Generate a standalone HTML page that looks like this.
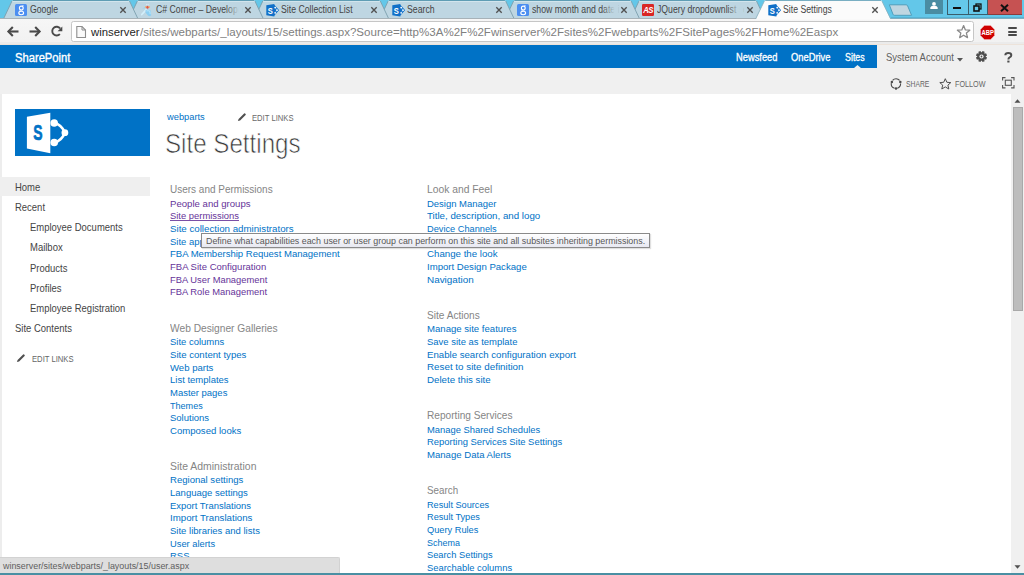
<!DOCTYPE html><html><head><meta charset='utf-8'><style>
*{margin:0;padding:0;box-sizing:border-box}
html,body{width:1024px;height:575px;overflow:hidden;background:#fff;font-family:"Liberation Sans", sans-serif}
.a{position:absolute}
.t{position:absolute;white-space:pre;transform-origin:0 0;font-family:"Liberation Sans", sans-serif}
</style></head><body>
<div class='a' style='left:0;top:0;width:1024px;height:19px;background:#63c7e9;z-index:0'></div>
<div class='a' style='left:0;top:18px;width:1024px;height:27px;background:linear-gradient(#f6f6f6,#f1f1f1);border-top:1px solid #fdfdfd;z-index:0'></div>
<svg class='a' style='left:0;top:0;z-index:1' width='1024' height='20' viewBox='0 0 1024 20'><path d='M630.70,18.5 L639.00,1 Q639.50,0 640.50,0 L755.00,0 Q756.00,0 756.50,1 L764.80,18.5 Z' fill='#bed6e2'/><path d='M630.70,18.5 L639.00,1 M756.50,1 L764.80,18.5' stroke='#7c9fae' stroke-width='0.9' fill='none'/><path d='M639.80,0.5 L755.70,0.5' stroke='#5f9db4' stroke-width='1'/><path d='M639.50,1.5 L756.00,1.5' stroke='#d2e5ed' stroke-width='1'/><path d='M505.30,18.5 L513.60,1 Q514.10,0 515.10,0 L629.60,0 Q630.60,0 631.10,1 L639.40,18.5 Z' fill='#bed6e2'/><path d='M505.30,18.5 L513.60,1 M631.10,1 L639.40,18.5' stroke='#7c9fae' stroke-width='0.9' fill='none'/><path d='M514.40,0.5 L630.30,0.5' stroke='#5f9db4' stroke-width='1'/><path d='M514.10,1.5 L630.60,1.5' stroke='#d2e5ed' stroke-width='1'/><path d='M379.90,18.5 L388.20,1 Q388.70,0 389.70,0 L504.20,0 Q505.20,0 505.70,1 L514.00,18.5 Z' fill='#bed6e2'/><path d='M379.90,18.5 L388.20,1 M505.70,1 L514.00,18.5' stroke='#7c9fae' stroke-width='0.9' fill='none'/><path d='M389.00,0.5 L504.90,0.5' stroke='#5f9db4' stroke-width='1'/><path d='M388.70,1.5 L505.20,1.5' stroke='#d2e5ed' stroke-width='1'/><path d='M254.50,18.5 L262.80,1 Q263.30,0 264.30,0 L378.80,0 Q379.80,0 380.30,1 L388.60,18.5 Z' fill='#bed6e2'/><path d='M254.50,18.5 L262.80,1 M380.30,1 L388.60,18.5' stroke='#7c9fae' stroke-width='0.9' fill='none'/><path d='M263.60,0.5 L379.50,0.5' stroke='#5f9db4' stroke-width='1'/><path d='M263.30,1.5 L379.80,1.5' stroke='#d2e5ed' stroke-width='1'/><path d='M129.10,18.5 L137.40,1 Q137.90,0 138.90,0 L253.40,0 Q254.40,0 254.90,1 L263.20,18.5 Z' fill='#bed6e2'/><path d='M129.10,18.5 L137.40,1 M254.90,1 L263.20,18.5' stroke='#7c9fae' stroke-width='0.9' fill='none'/><path d='M138.20,0.5 L254.10,0.5' stroke='#5f9db4' stroke-width='1'/><path d='M137.90,1.5 L254.40,1.5' stroke='#d2e5ed' stroke-width='1'/><path d='M3.70,18.5 L12.00,1 Q12.50,0 13.50,0 L128.00,0 Q129.00,0 129.50,1 L137.80,18.5 Z' fill='#bed6e2'/><path d='M3.70,18.5 L12.00,1 M129.50,1 L137.80,18.5' stroke='#7c9fae' stroke-width='0.9' fill='none'/><path d='M12.80,0.5 L128.70,0.5' stroke='#5f9db4' stroke-width='1'/><path d='M12.50,1.5 L129.00,1.5' stroke='#d2e5ed' stroke-width='1'/><path d='M0,18.5 L1024,18.5' stroke='#a7b2b8' stroke-width='1'/><path d='M755.60,19.5 L764.40,1 Q764.90,0 765.90,0 L880.40,0 Q881.40,0 881.90,1 L890.70,19.5 Z' fill='#fbfbfb'/><path d='M755.60,19 L764.40,1 M881.90,1 L890.70,19' stroke='#86aebd' stroke-width='0.8' fill='none'/><path d='M765.20,0.5 L881.10,0.5' stroke='#79aec2' stroke-width='1'/><path d='M889.3,4.8 L906.2,4.8 Q907.2,4.8 907.6,5.8 L911.6,15.3 L894.4,15.3 Q893.4,15.3 893,14.3 Z' fill='#bfd6e1' stroke='#4f9fbd' stroke-width='1' stroke-linejoin='round'/><path d='M891,17.9 L1024,17.9' stroke='#55abcb' stroke-width='1.2'/></svg>
<svg class='a' style='left:15px;top:4px;z-index:3' width='12' height='12' viewBox='0 0 12 12'><rect x='0' y='0' width='12' height='12' rx='1.5' fill='#4b8ef1'/><ellipse cx='6.3' cy='4.1' rx='1.9' ry='2' fill='none' stroke='#fff' stroke-width='1.1'/><path d='M7.2,1.8 L8.6,1.8' stroke='#fff' stroke-width='0.9'/><ellipse cx='6.2' cy='9' rx='2.4' ry='1.7' fill='none' stroke='#fff' stroke-width='1.1'/><path d='M5.5,6 Q4.2,6.6 5.4,7.4' fill='none' stroke='#fff' stroke-width='0.9'/></svg>
<svg class='a' style='left:118.8px;top:5.6px;z-index:3' width='8' height='8' viewBox='0 0 8 8'><path d='M1.3,1.3 L6.7,6.7 M6.7,1.3 L1.3,6.7' stroke='#505050' stroke-width='1.35'/></svg>
<svg class='a' style='left:141px;top:4px;z-index:3' width='13' height='13' viewBox='0 0 13 13'><path d='M0.8,10.5 L5,5.8' stroke='#d2eefa' stroke-width='1.8' stroke-linecap='round'/><path d='M2.2,4.5 Q3,3 4,4' stroke='#8fd3f3' stroke-width='1' fill='none'/><path d='M4.5,6.2 Q7,5.2 9.6,6.4 L10.2,11 Q9.2,13 7.2,11.8 L4.6,8.8 Z' fill='#8ccff2'/><path d='M5.5,7 Q7,6.3 8.8,7.2 L9.2,10.2' stroke='#c8ecfb' stroke-width='0.8' fill='none'/><circle cx='4.9' cy='3' r='1' fill='#ebb978'/><circle cx='8.1' cy='3' r='1' fill='#ebb978'/><path d='M5.3,1.1 L5.9,0.3 M7.5,1.1 L7,0.3' stroke='#ffffff' stroke-width='0.7'/><ellipse cx='6.5' cy='3.2' rx='1.1' ry='1.5' fill='#e05548'/></svg>
<svg class='a' style='left:244.2px;top:5.6px;z-index:3' width='8' height='8' viewBox='0 0 8 8'><path d='M1.3,1.3 L6.7,6.7 M6.7,1.3 L1.3,6.7' stroke='#505050' stroke-width='1.35'/></svg>
<svg class='a' style='left:266px;top:3.5px;z-index:3' width='13' height='13' viewBox='0 0 13 13'><path d='M0.3,1.3 L8.4,0 L8.4,12.4 L0.3,11.2 Z' fill='#1170c8'/><path d='M8,1.3 L12.3,6.2 L8,11.1 Z' fill='#1170c8' stroke='#1170c8' stroke-width='1.2' stroke-linejoin='round'/><circle cx='9.2' cy='3.6' r='0.9' fill='#fff'/><circle cx='11' cy='6.2' r='0.9' fill='#fff'/><circle cx='9.2' cy='8.8' r='0.9' fill='#fff'/><path d='M9.2,3.6 L11,6.2 L9.2,8.8' fill='none' stroke='#b5d5f2' stroke-width='0.5'/><text x='0' y='0' transform='translate(4.3,9.9) scale(0.8,1)' font-family='Liberation Sans' font-weight='bold' font-size='9.5' fill='#fff' text-anchor='middle'>S</text></svg>
<svg class='a' style='left:369.6px;top:5.6px;z-index:3' width='8' height='8' viewBox='0 0 8 8'><path d='M1.3,1.3 L6.7,6.7 M6.7,1.3 L1.3,6.7' stroke='#505050' stroke-width='1.35'/></svg>
<svg class='a' style='left:392px;top:3.5px;z-index:3' width='13' height='13' viewBox='0 0 13 13'><path d='M0.3,1.3 L8.4,0 L8.4,12.4 L0.3,11.2 Z' fill='#1170c8'/><path d='M8,1.3 L12.3,6.2 L8,11.1 Z' fill='#1170c8' stroke='#1170c8' stroke-width='1.2' stroke-linejoin='round'/><circle cx='9.2' cy='3.6' r='0.9' fill='#fff'/><circle cx='11' cy='6.2' r='0.9' fill='#fff'/><circle cx='9.2' cy='8.8' r='0.9' fill='#fff'/><path d='M9.2,3.6 L11,6.2 L9.2,8.8' fill='none' stroke='#b5d5f2' stroke-width='0.5'/><text x='0' y='0' transform='translate(4.3,9.9) scale(0.8,1)' font-family='Liberation Sans' font-weight='bold' font-size='9.5' fill='#fff' text-anchor='middle'>S</text></svg>
<svg class='a' style='left:495.0px;top:5.6px;z-index:3' width='8' height='8' viewBox='0 0 8 8'><path d='M1.3,1.3 L6.7,6.7 M6.7,1.3 L1.3,6.7' stroke='#505050' stroke-width='1.35'/></svg>
<svg class='a' style='left:517px;top:4px;z-index:3' width='12' height='12' viewBox='0 0 12 12'><rect x='0' y='0' width='12' height='12' rx='1.5' fill='#4b8ef1'/><ellipse cx='6.3' cy='4.1' rx='1.9' ry='2' fill='none' stroke='#fff' stroke-width='1.1'/><path d='M7.2,1.8 L8.6,1.8' stroke='#fff' stroke-width='0.9'/><ellipse cx='6.2' cy='9' rx='2.4' ry='1.7' fill='none' stroke='#fff' stroke-width='1.1'/><path d='M5.5,6 Q4.2,6.6 5.4,7.4' fill='none' stroke='#fff' stroke-width='0.9'/></svg>
<svg class='a' style='left:620.4px;top:5.6px;z-index:3' width='8' height='8' viewBox='0 0 8 8'><path d='M1.3,1.3 L6.7,6.7 M6.7,1.3 L1.3,6.7' stroke='#505050' stroke-width='1.35'/></svg>
<svg class='a' style='left:642px;top:4px;z-index:3' width='12' height='12' viewBox='0 0 12 12'><rect x='0' y='0' width='12' height='12' rx='1.2' fill='#d92624'/><text x='0' y='0' transform='translate(6,9.2) scale(0.95,1)' font-family='Liberation Sans' font-style='italic' font-weight='bold' font-size='8.2' fill='#fff' text-anchor='middle' letter-spacing='-0.6'>AS</text></svg>
<svg class='a' style='left:745.8px;top:5.6px;z-index:3' width='8' height='8' viewBox='0 0 8 8'><path d='M1.3,1.3 L6.7,6.7 M6.7,1.3 L1.3,6.7' stroke='#505050' stroke-width='1.35'/></svg>
<svg class='a' style='left:768px;top:3.5px;z-index:3' width='13' height='13' viewBox='0 0 13 13'><path d='M0.3,1.3 L8.4,0 L8.4,12.4 L0.3,11.2 Z' fill='#1170c8'/><path d='M8,1.3 L12.3,6.2 L8,11.1 Z' fill='#1170c8' stroke='#1170c8' stroke-width='1.2' stroke-linejoin='round'/><circle cx='9.2' cy='3.6' r='0.9' fill='#fff'/><circle cx='11' cy='6.2' r='0.9' fill='#fff'/><circle cx='9.2' cy='8.8' r='0.9' fill='#fff'/><path d='M9.2,3.6 L11,6.2 L9.2,8.8' fill='none' stroke='#b5d5f2' stroke-width='0.5'/><text x='0' y='0' transform='translate(4.3,9.9) scale(0.8,1)' font-family='Liberation Sans' font-weight='bold' font-size='9.5' fill='#fff' text-anchor='middle'>S</text></svg>
<svg class='a' style='left:871.2px;top:5.6px;z-index:3' width='8' height='8' viewBox='0 0 8 8'><path d='M1.3,1.3 L6.7,6.7 M6.7,1.3 L1.3,6.7' stroke='#505050' stroke-width='1.35'/></svg>
<div class='a' style='left:225.7px;top:2px;width:16px;height:15px;background:linear-gradient(90deg,rgba(190,214,226,0),#bed6e2 80%);z-index:3'></div>
<div class='a' style='left:351.1px;top:2px;width:16px;height:15px;background:linear-gradient(90deg,rgba(190,214,226,0),#bed6e2 80%);z-index:3'></div>
<div class='a' style='left:601.9px;top:2px;width:16px;height:15px;background:linear-gradient(90deg,rgba(190,214,226,0),#bed6e2 80%);z-index:3'></div>
<div class='a' style='left:727.3px;top:2px;width:16px;height:15px;background:linear-gradient(90deg,rgba(190,214,226,0),#bed6e2 80%);z-index:3'></div>
<div class='a' style='left:925px;top:0;width:18px;height:14px;background:#4a8ca2;z-index:2'><svg width='18' height='14' viewBox='0 0 18 14' style='position:absolute;left:0;top:0'><circle cx='9' cy='3.9' r='1.9' fill='#fff'/><path d='M5.2,9 L5.6,7.2 Q6,6.1 7.5,6.1 L10.5,6.1 Q12,6.1 12.4,7.2 L12.8,9 Z' fill='#fff'/></svg></div>
<div class='a' style='left:947px;top:0;width:41px;height:14.5px;border:1px solid #3a5d6b;border-top:none;background:#65c8ea;z-index:2'></div>
<div class='a' style='left:967.5px;top:0;width:1px;height:14px;background:#3a5d6b;z-index:2'></div>
<div class='a' style='left:953px;top:7px;width:8px;height:2px;background:#111;z-index:3'></div>
<svg class='a' style='left:973px;top:3px;z-index:3' width='9' height='9' viewBox='0 0 9 9'><rect x='3' y='1' width='5' height='5' fill='none' stroke='#111' stroke-width='1.3'/><rect x='1' y='3' width='5' height='5' fill='#65c8ea' stroke='#111' stroke-width='1.6'/></svg>
<div class='a' style='left:987.5px;top:0;width:34.5px;height:14.5px;background:#c65252;border-bottom:1px solid #8a3b3b;z-index:2'></div>
<svg class='a' style='left:1000px;top:3.5px;z-index:3' width='9' height='8' viewBox='0 0 9 8'><path d='M1,0.8 L8,7.2 M8,0.8 L1,7.2' stroke='#111' stroke-width='2'/></svg>
<svg class='a' style='left:5px;top:25px;z-index:3' width='60' height='16' viewBox='0 0 60 16'><path d='M3.5,6.5 L13.5,6.5' stroke='#4a4a4a' stroke-width='2.1'/><path d='M7.8,2.1 L3.4,6.5 L7.8,10.9' fill='none' stroke='#4a4a4a' stroke-width='2.1'/><path d='M24.5,6.5 L34.6,6.5' stroke='#4a4a4a' stroke-width='2.1'/><path d='M30.2,2.1 L34.6,6.5 L30.2,10.9' fill='none' stroke='#4a4a4a' stroke-width='2.1'/><path d='M54.87,9.13 A4.4,4.4 0 1 1 55.2,3.5' fill='none' stroke='#4a4a4a' stroke-width='1.9'/><path d='M52.6,6.3 L57.3,6.3 L57.3,1.6 Z' fill='#4a4a4a'/></svg>
<div class='a' style='left:70.5px;top:21px;width:903px;height:21px;background:#fff;border:1px solid #c6c6c6;border-radius:2.5px;z-index:2'></div>
<svg class='a' style='left:75px;top:25px;z-index:3' width='12' height='14' viewBox='0 0 12 14'><path d='M1.8,1.5 L7,1.5 L10.5,5 L10.5,12.5 L1.8,12.5 Z' fill='#fafafa' stroke='#8e8e8e' stroke-width='1.1'/><path d='M7,1.5 L7,5 L10.5,5' fill='none' stroke='#8e8e8e' stroke-width='1'/></svg>
<svg class='a' style='left:956px;top:24px;z-index:3' width='16' height='16' viewBox='0 0 16 16'><path d='M7.6,1.6 L9.4,5.9 L13.8,6.2 L10.4,9.1 L11.5,13.6 L7.6,11.2 L3.7,13.6 L4.8,9.1 L1.4,6.2 L5.8,5.9 Z' fill='#fff' stroke='#8a8a8a' stroke-width='1.3' stroke-linejoin='round'/></svg>
<svg class='a' style='left:979px;top:23.5px;z-index:3' width='17' height='17' viewBox='0 0 17 17'><path d='M5.4,1.3 L11.6,1.3 L15.7,5.4 L15.7,11.6 L11.6,15.7 L5.4,15.7 L1.3,11.6 L1.3,5.4 Z' fill='#cf0000' stroke='#fff' stroke-width='0.6'/><text x='0' y='0' transform='translate(8.6,10.9) scale(0.82,1)' font-family='Liberation Sans' font-weight='bold' font-size='7.2' fill='#fff' text-anchor='middle'>ABP</text></svg>
<div class='a' style='left:1007.8px;top:26.9px;width:9px;height:2px;border-radius:1px;background:#484848;z-index:3'></div>
<div class='a' style='left:1007.8px;top:30.6px;width:9px;height:2px;border-radius:1px;background:#484848;z-index:3'></div>
<div class='a' style='left:1007.8px;top:34.3px;width:9px;height:2px;border-radius:1px;background:#484848;z-index:3'></div>
<div class='a' style='left:0;top:42px;width:1024px;height:2px;background:#ebebeb;z-index:2'></div>
<div class='a' style='left:0;top:44px;width:1024px;height:1px;background:#ede3da;z-index:2'></div>
<div class='a' style='left:0;top:45px;width:877px;height:23px;background:#0072c6;z-index:2'></div>
<div class='a' style='left:877px;top:45px;width:147px;height:23px;background:#f0f0f0;z-index:2'></div>
<svg class='a' style='left:852px;top:64px;z-index:3' width='11' height='5' viewBox='0 0 11 5'><path d='M1.5,4.5 L5.5,1 L9.5,4.5 Z' fill='#f0f0f0'/></svg>
<div class='a' style='left:0;top:68px;width:1024px;height:26px;background:#f0f0f0;z-index:1'></div>
<svg class='a' style='left:956.5px;top:57.5px;z-index:3' width='6' height='4' viewBox='0 0 6 4'><path d='M0,0 L6,0 L3,3.5 Z' fill='#555'/></svg>
<svg class='a' style='left:975px;top:50.4px;z-index:3' width='13' height='13' viewBox='0 0 13 13'><g fill='#4d4d4d'><rect x='5.25' y='1' width='2.5' height='3' rx='0.2' transform='rotate(22.5 6.5 6.5)'/><rect x='5.25' y='1' width='2.5' height='3' rx='0.2' transform='rotate(67.5 6.5 6.5)'/><rect x='5.25' y='1' width='2.5' height='3' rx='0.2' transform='rotate(112.5 6.5 6.5)'/><rect x='5.25' y='1' width='2.5' height='3' rx='0.2' transform='rotate(157.5 6.5 6.5)'/><rect x='5.25' y='1' width='2.5' height='3' rx='0.2' transform='rotate(202.5 6.5 6.5)'/><rect x='5.25' y='1' width='2.5' height='3' rx='0.2' transform='rotate(247.5 6.5 6.5)'/><rect x='5.25' y='1' width='2.5' height='3' rx='0.2' transform='rotate(292.5 6.5 6.5)'/><rect x='5.25' y='1' width='2.5' height='3' rx='0.2' transform='rotate(337.5 6.5 6.5)'/><circle cx='6.5' cy='6.5' r='4.3'/></g><circle cx='6.5' cy='6.5' r='2.1' fill='#f0f0f0'/><circle cx='6.5' cy='6.5' r='0.9' fill='#4d4d4d'/></svg>
<svg class='a' style='left:1004px;top:51.5px;z-index:3' width='9' height='11' viewBox='0 0 9 11'><path d='M1.3,3.3 Q1.4,1 4.3,1 Q7.3,1 7.3,3.2 Q7.3,4.6 5.6,5.4 Q4.4,6 4.4,7.6' fill='none' stroke='#4d4d4d' stroke-width='2'/><rect x='3.3' y='8.6' width='2.2' height='1.9' fill='#4d4d4d'/></svg>
<svg class='a' style='left:889.5px;top:78.3px;z-index:3' width='12' height='12' viewBox='0 0 12 12'><path d='M2.6,2.3 A4.6,4.6 0 0 1 9.6,2.4 M10.6,5.6 A4.6,4.6 0 0 1 7.3,10.2 M4.6,10.3 A4.6,4.6 0 0 1 1.3,5.2' fill='none' stroke='#4a4a4a' stroke-width='1.1'/><circle cx='1.9' cy='4' r='1.25' fill='#4a4a4a'/><circle cx='10.3' cy='3.9' r='1.25' fill='#4a4a4a'/><circle cx='6' cy='10.6' r='1.25' fill='#4a4a4a'/></svg>
<svg class='a' style='left:938.8px;top:78.2px;z-index:3' width='13' height='12' viewBox='0 0 13 12'><path d='M6.3,0.7 L7.9,4.3 L11.8,4.6 L8.9,7.1 L9.8,11 L6.3,8.9 L2.8,11 L3.7,7.1 L0.8,4.6 L4.7,4.3 Z' fill='none' stroke='#505050' stroke-width='1' stroke-linejoin='round'/></svg>
<svg class='a' style='left:1002px;top:77.2px;z-index:3' width='13' height='12' viewBox='0 0 13 12'><path d='M0.6,3.5 L0.6,0.6 L3.5,0.6 M9.1,0.6 L12,0.6 L12,3.5 M12,8 L12,10.9 L9.1,10.9 M3.5,10.9 L0.6,10.9 L0.6,8' fill='none' stroke='#555' stroke-width='1.1'/><rect x='3.3' y='3.2' width='6' height='5.1' fill='none' stroke='#555' stroke-width='1.1'/></svg>
<div class='a' style='left:0;top:94px;width:1.5px;height:480px;background:#ededed;z-index:1'></div>
<div class='a' style='left:1011px;top:94px;width:13px;height:479px;background:#f0f0f0;z-index:1'></div>
<svg class='a' style='left:1014px;top:99px;z-index:2' width='7' height='4' viewBox='0 0 7 4'><path d='M0.5,3.7 L3.5,0.3 L6.5,3.7 Z' fill='#505050'/></svg>
<div class='a' style='left:1013px;top:107px;width:9.5px;height:204px;background:#bdbdbd;border:1px solid #a9a9a9;z-index:2'></div>
<svg class='a' style='left:1014px;top:565px;z-index:2' width='7' height='4' viewBox='0 0 7 4'><path d='M0.5,0.3 L3.5,3.7 L6.5,0.3 Z' fill='#505050'/></svg>
<div class='a' style='left:15px;top:108.5px;width:135px;height:47.5px;background:#0072c6;z-index:1'></div>
<svg class='a' style='left:15px;top:108.5px;z-index:2' width='60' height='48' viewBox='0 0 60 48'><path d='M11.9,7.8 L35.3,3.7 L35.3,44.2 L11.9,39.6 Z' fill='#fff'/><path d='M39.3,14 Q46.5,15.5 49.9,23.7 Q46.5,31.9 39.3,33.5' fill='none' stroke='#fff' stroke-width='2.7'/><circle cx='39.2' cy='14' r='3.8' fill='#fff'/><circle cx='49.9' cy='23.7' r='3.4' fill='#fff'/><circle cx='39.2' cy='33.5' r='3.8' fill='#fff'/><text x='0' y='0' transform='translate(18.3,31.0) scale(0.62,1)' font-family='Liberation Sans' font-weight='bold' font-size='22.5' fill='#0072c6' stroke='#0072c6' stroke-width='0.7'>S</text></svg>
<svg class='a' style='left:236.8px;top:112px;z-index:2' width='10' height='10' viewBox='0 0 10 10'><path d='M0.9,9.1 L1.6,6.9 L7.1,1.4 Q7.6,0.9 8.1,1.4 L8.6,1.9 Q9.1,2.4 8.6,2.9 L3.1,8.4 Z' fill='#505050'/></svg>
<svg class='a' style='left:16.2px;top:352.5px;z-index:2' width='10' height='10' viewBox='0 0 10 10'><path d='M0.9,9.1 L1.6,6.9 L7.1,1.4 Q7.6,0.9 8.1,1.4 L8.6,1.9 Q9.1,2.4 8.6,2.9 L3.1,8.4 Z' fill='#505050'/></svg>
<div class='a' style='left:0;top:176.6px;width:150px;height:19.8px;background:#efefef;z-index:1'></div>
<div class='a' style='left:201.2px;top:233.4px;width:448.4px;height:14.8px;background:linear-gradient(#ffffff,#e7e8f1);border:1px solid #8a8a8a;box-shadow:1px 1px 1px rgba(0,0,0,0.12);z-index:10'></div>
<div class='a' style='left:0;top:557px;width:340px;height:15.5px;background:#dedede;border-top:1px solid #d2d2d2;border-right:1px solid #d2d2d2;border-top-right-radius:2px;z-index:10'></div>
<div class='a' style='left:0;top:572.5px;width:1024px;height:0.8px;background:#f5f5f5;z-index:12'></div>
<div class='a' style='left:0;top:573px;width:1024px;height:2px;background:#4a8fa3;z-index:12'></div>
<div class='a' style='left:170px;top:220px;width:69px;height:1px;background:#7a4fa6;z-index:6'></div>
<div class='t' style='left:15.00px;top:51.70px;font-size:12px;line-height:12px;color:#ffffff;z-index:5;transform:scaleX(0.9327);-webkit-text-stroke:0.35px #fff;'>SharePoint</div>
<div class='t' style='left:736.40px;top:51.60px;font-size:10.5px;line-height:10.5px;color:#ffffff;z-index:5;transform:scaleX(0.8879);-webkit-text-stroke:0.3px #fff;'>Newsfeed</div>
<div class='t' style='left:791.40px;top:51.60px;font-size:10.5px;line-height:10.5px;color:#ffffff;z-index:5;transform:scaleX(0.8897);-webkit-text-stroke:0.3px #fff;'>OneDrive</div>
<div class='t' style='left:844.50px;top:51.60px;font-size:10.5px;line-height:10.5px;color:#ffffff;z-index:5;transform:scaleX(0.8444);-webkit-text-stroke:0.3px #fff;'>Sites</div>
<div class='t' style='left:885.50px;top:52.00px;font-size:10.8px;line-height:10.8px;color:#606060;z-index:5;transform:scaleX(0.8755);'>System Account</div>
<div class='t' style='left:905.60px;top:80.00px;font-size:8.8px;line-height:8.8px;color:#666666;z-index:5;transform:scaleX(0.7687);'>SHARE</div>
<div class='t' style='left:955.00px;top:80.00px;font-size:8.8px;line-height:8.8px;color:#666666;z-index:5;transform:scaleX(0.8192);'>FOLLOW</div>
<div class='t' style='left:166.85px;top:112.40px;font-size:9.75px;line-height:9.75px;color:#0072c6;z-index:5;transform:scaleX(0.9536);'>webparts</div>
<div class='t' style='left:252.00px;top:113.30px;font-size:9.8px;line-height:9.8px;color:#6a6a6a;z-index:5;transform:scaleX(0.7804);'>EDIT LINKS</div>
<div class='t' style='left:165.15px;top:129.30px;font-size:28.5px;line-height:28.5px;color:#3a3a3a;z-index:5;transform:scaleX(0.8472);-webkit-text-stroke:0.7px #fff;'>Site Settings</div>
<div class='t' style='left:15.00px;top:182.90px;font-size:10.2px;line-height:10.2px;color:#444444;z-index:5;transform:scaleX(0.9300);'>Home</div>
<div class='t' style='left:15.00px;top:202.90px;font-size:10.2px;line-height:10.2px;color:#444444;z-index:5;transform:scaleX(0.9300);'>Recent</div>
<div class='t' style='left:30.30px;top:223.20px;font-size:10.2px;line-height:10.2px;color:#444444;z-index:5;transform:scaleX(0.9300);'>Employee Documents</div>
<div class='t' style='left:30.30px;top:243.40px;font-size:10.2px;line-height:10.2px;color:#444444;z-index:5;transform:scaleX(0.9300);'>Mailbox</div>
<div class='t' style='left:30.30px;top:263.60px;font-size:10.2px;line-height:10.2px;color:#444444;z-index:5;transform:scaleX(0.9300);'>Products</div>
<div class='t' style='left:30.30px;top:283.80px;font-size:10.2px;line-height:10.2px;color:#444444;z-index:5;transform:scaleX(0.9300);'>Profiles</div>
<div class='t' style='left:30.30px;top:304.00px;font-size:10.2px;line-height:10.2px;color:#444444;z-index:5;transform:scaleX(0.9300);'>Employee Registration</div>
<div class='t' style='left:15.00px;top:324.20px;font-size:10.2px;line-height:10.2px;color:#444444;z-index:5;transform:scaleX(0.9300);'>Site Contents</div>
<div class='t' style='left:31.90px;top:354.30px;font-size:9.8px;line-height:9.8px;color:#666666;z-index:5;transform:scaleX(0.7823);'>EDIT LINKS</div>
<div class='t' style='left:169.80px;top:184.00px;font-size:10.8px;line-height:10.8px;color:#858585;z-index:5;transform:scaleX(0.9247);'>Users and Permissions</div>
<div class='t' style='left:169.80px;top:198.70px;font-size:9.75px;line-height:9.75px;color:#663399;z-index:5;transform:scaleX(0.9844);'>People and groups</div>
<div class='t' style='left:169.80px;top:211.36px;font-size:9.75px;line-height:9.75px;color:#663399;z-index:5;transform:scaleX(0.9644);'>Site permissions</div>
<div class='t' style='left:169.80px;top:224.02px;font-size:9.75px;line-height:9.75px;color:#0072c6;z-index:5;transform:scaleX(0.9966);'>Site collection administrators</div>
<div class='t' style='left:169.80px;top:236.68px;font-size:9.75px;line-height:9.75px;color:#0072c6;z-index:5;transform:scaleX(0.9700);'>Site app permissions</div>
<div class='t' style='left:169.80px;top:249.34px;font-size:9.75px;line-height:9.75px;color:#0072c6;z-index:5;transform:scaleX(0.9779);'>FBA Membership Request Management</div>
<div class='t' style='left:169.80px;top:262.00px;font-size:9.75px;line-height:9.75px;color:#663399;z-index:5;transform:scaleX(0.9752);'>FBA Site Configuration</div>
<div class='t' style='left:169.80px;top:274.66px;font-size:9.75px;line-height:9.75px;color:#663399;z-index:5;transform:scaleX(0.9602);'>FBA User Management</div>
<div class='t' style='left:169.80px;top:287.32px;font-size:9.75px;line-height:9.75px;color:#663399;z-index:5;transform:scaleX(0.9623);'>FBA Role Management</div>
<div class='t' style='left:169.80px;top:322.50px;font-size:10.8px;line-height:10.8px;color:#858585;z-index:5;transform:scaleX(0.9457);'>Web Designer Galleries</div>
<div class='t' style='left:169.80px;top:337.20px;font-size:9.75px;line-height:9.75px;color:#0072c6;z-index:5;transform:scaleX(0.9707);'>Site columns</div>
<div class='t' style='left:169.80px;top:349.86px;font-size:9.75px;line-height:9.75px;color:#0072c6;z-index:5;transform:scaleX(0.9854);'>Site content types</div>
<div class='t' style='left:169.80px;top:362.52px;font-size:9.75px;line-height:9.75px;color:#0072c6;z-index:5;transform:scaleX(0.9802);'>Web parts</div>
<div class='t' style='left:169.80px;top:375.18px;font-size:9.75px;line-height:9.75px;color:#0072c6;z-index:5;transform:scaleX(0.9738);'>List templates</div>
<div class='t' style='left:169.80px;top:387.84px;font-size:9.75px;line-height:9.75px;color:#0072c6;z-index:5;transform:scaleX(0.9713);'>Master pages</div>
<div class='t' style='left:169.80px;top:400.50px;font-size:9.75px;line-height:9.75px;color:#0072c6;z-index:5;transform:scaleX(0.9280);'>Themes</div>
<div class='t' style='left:169.80px;top:413.16px;font-size:9.75px;line-height:9.75px;color:#0072c6;z-index:5;transform:scaleX(0.9743);'>Solutions</div>
<div class='t' style='left:169.80px;top:425.82px;font-size:9.75px;line-height:9.75px;color:#0072c6;z-index:5;transform:scaleX(0.9815);'>Composed looks</div>
<div class='t' style='left:169.80px;top:460.70px;font-size:10.8px;line-height:10.8px;color:#858585;z-index:5;transform:scaleX(0.9666);'>Site Administration</div>
<div class='t' style='left:169.80px;top:475.40px;font-size:9.75px;line-height:9.75px;color:#0072c6;z-index:5;transform:scaleX(0.9797);'>Regional settings</div>
<div class='t' style='left:169.80px;top:488.06px;font-size:9.75px;line-height:9.75px;color:#0072c6;z-index:5;transform:scaleX(0.9773);'>Language settings</div>
<div class='t' style='left:169.80px;top:500.72px;font-size:9.75px;line-height:9.75px;color:#0072c6;z-index:5;transform:scaleX(0.9719);'>Export Translations</div>
<div class='t' style='left:169.80px;top:513.38px;font-size:9.75px;line-height:9.75px;color:#0072c6;z-index:5;transform:scaleX(0.9939);'>Import Translations</div>
<div class='t' style='left:169.80px;top:526.04px;font-size:9.75px;line-height:9.75px;color:#0072c6;z-index:5;transform:scaleX(0.9757);'>Site libraries and lists</div>
<div class='t' style='left:169.80px;top:538.70px;font-size:9.75px;line-height:9.75px;color:#0072c6;z-index:5;transform:scaleX(0.9564);'>User alerts</div>
<div class='t' style='left:169.80px;top:551.36px;font-size:9.75px;line-height:9.75px;color:#0072c6;z-index:5;transform:scaleX(0.9700);'>RSS</div>
<div class='t' style='left:426.70px;top:184.00px;font-size:10.8px;line-height:10.8px;color:#858585;z-index:5;transform:scaleX(0.9554);'>Look and Feel</div>
<div class='t' style='left:426.70px;top:198.70px;font-size:9.75px;line-height:9.75px;color:#0072c6;z-index:5;transform:scaleX(0.9711);'>Design Manager</div>
<div class='t' style='left:426.70px;top:211.36px;font-size:9.75px;line-height:9.75px;color:#0072c6;z-index:5;transform:scaleX(0.9980);'>Title, description, and logo</div>
<div class='t' style='left:426.70px;top:224.02px;font-size:9.75px;line-height:9.75px;color:#0072c6;z-index:5;transform:scaleX(0.9454);'>Device Channels</div>
<div class='t' style='left:426.70px;top:236.68px;font-size:9.75px;line-height:9.75px;color:#0072c6;z-index:5;transform:scaleX(0.9700);'>Master page</div>
<div class='t' style='left:426.70px;top:249.34px;font-size:9.75px;line-height:9.75px;color:#0072c6;z-index:5;transform:scaleX(0.9939);'>Change the look</div>
<div class='t' style='left:426.70px;top:262.00px;font-size:9.75px;line-height:9.75px;color:#0072c6;z-index:5;transform:scaleX(0.9840);'>Import Design Package</div>
<div class='t' style='left:426.70px;top:274.66px;font-size:9.75px;line-height:9.75px;color:#0072c6;z-index:5;transform:scaleX(1.0143);'>Navigation</div>
<div class='t' style='left:426.70px;top:309.50px;font-size:10.8px;line-height:10.8px;color:#858585;z-index:5;transform:scaleX(0.9356);'>Site Actions</div>
<div class='t' style='left:426.70px;top:324.20px;font-size:9.75px;line-height:9.75px;color:#0072c6;z-index:5;transform:scaleX(0.9827);'>Manage site features</div>
<div class='t' style='left:426.70px;top:336.86px;font-size:9.75px;line-height:9.75px;color:#0072c6;z-index:5;transform:scaleX(0.9699);'>Save site as template</div>
<div class='t' style='left:426.70px;top:349.52px;font-size:9.75px;line-height:9.75px;color:#0072c6;z-index:5;transform:scaleX(0.9883);'>Enable search configuration export</div>
<div class='t' style='left:426.70px;top:362.18px;font-size:9.75px;line-height:9.75px;color:#0072c6;z-index:5;transform:scaleX(1.0062);'>Reset to site definition</div>
<div class='t' style='left:426.70px;top:374.84px;font-size:9.75px;line-height:9.75px;color:#0072c6;z-index:5;transform:scaleX(0.9965);'>Delete this site</div>
<div class='t' style='left:426.70px;top:410.00px;font-size:10.8px;line-height:10.8px;color:#858585;z-index:5;transform:scaleX(0.9377);'>Reporting Services</div>
<div class='t' style='left:426.70px;top:424.70px;font-size:9.75px;line-height:9.75px;color:#0072c6;z-index:5;transform:scaleX(0.9622);'>Manage Shared Schedules</div>
<div class='t' style='left:426.70px;top:437.36px;font-size:9.75px;line-height:9.75px;color:#0072c6;z-index:5;transform:scaleX(0.9668);'>Reporting Services Site Settings</div>
<div class='t' style='left:426.70px;top:450.02px;font-size:9.75px;line-height:9.75px;color:#0072c6;z-index:5;transform:scaleX(0.9815);'>Manage Data Alerts</div>
<div class='t' style='left:426.70px;top:485.00px;font-size:10.8px;line-height:10.8px;color:#858585;z-index:5;transform:scaleX(0.9092);'>Search</div>
<div class='t' style='left:426.70px;top:499.70px;font-size:9.75px;line-height:9.75px;color:#0072c6;z-index:5;transform:scaleX(0.9390);'>Result Sources</div>
<div class='t' style='left:426.70px;top:512.36px;font-size:9.75px;line-height:9.75px;color:#0072c6;z-index:5;transform:scaleX(0.9419);'>Result Types</div>
<div class='t' style='left:426.70px;top:525.02px;font-size:9.75px;line-height:9.75px;color:#0072c6;z-index:5;transform:scaleX(0.9482);'>Query Rules</div>
<div class='t' style='left:426.70px;top:537.68px;font-size:9.75px;line-height:9.75px;color:#0072c6;z-index:5;transform:scaleX(0.9190);'>Schema</div>
<div class='t' style='left:426.70px;top:550.34px;font-size:9.75px;line-height:9.75px;color:#0072c6;z-index:5;transform:scaleX(0.9528);'>Search Settings</div>
<div class='t' style='left:426.70px;top:563.00px;font-size:9.75px;line-height:9.75px;color:#0072c6;z-index:5;transform:scaleX(0.9631);'>Searchable columns</div>
<div class='t' style='left:30.30px;top:4.60px;font-size:10px;line-height:10px;color:#444444;z-index:2;transform:scaleX(0.8700);width:98.85px;overflow:hidden;'>Google</div>
<div class='t' style='left:155.70px;top:4.60px;font-size:10px;line-height:10px;color:#444444;z-index:2;transform:scaleX(0.8700);width:98.85px;overflow:hidden;'>C# Corner – Developer Community</div>
<div class='t' style='left:281.10px;top:4.60px;font-size:10px;line-height:10px;color:#444444;z-index:2;transform:scaleX(0.8700);width:98.85px;overflow:hidden;'>Site Collection List</div>
<div class='t' style='left:406.50px;top:4.60px;font-size:10px;line-height:10px;color:#444444;z-index:2;transform:scaleX(0.8700);width:98.85px;overflow:hidden;'>Search</div>
<div class='t' style='left:531.90px;top:4.60px;font-size:10px;line-height:10px;color:#444444;z-index:2;transform:scaleX(0.8700);width:98.85px;overflow:hidden;'>show month and date in jquery</div>
<div class='t' style='left:657.30px;top:4.60px;font-size:10px;line-height:10px;color:#444444;z-index:2;transform:scaleX(0.8700);width:98.85px;overflow:hidden;'>JQuery dropdownlist selected</div>
<div class='t' style='left:782.70px;top:4.60px;font-size:10px;line-height:10px;color:#444444;z-index:2;transform:scaleX(0.8700);width:98.85px;overflow:hidden;'>Site Settings</div>
<div class='t' style='left:90.99px;top:27.00px;font-size:11.5px;line-height:11.5px;color:#262626;z-index:4;transform:scaleX(0.9866);'>winserver</div>
<div class='t' style='left:139.70px;top:27.00px;font-size:11.5px;line-height:11.5px;color:#808080;z-index:4;transform:scaleX(1.0044);'>/sites/webparts/_layouts/15/settings.aspx?Source=htt<span>p</span>%3A%2F%2Fwinserver%2Fsites%2Fwebparts%2FSitePages%2FHome%2Easpx</div>
<div class='t' style='left:205.80px;top:236.00px;font-size:9.85px;line-height:9.85px;color:#575757;z-index:11;transform:scaleX(0.9018);'>Define what capabilities each user or user group can perform on this site and all subsites inheriting permissions.</div>
<div class='t' style='left:3.43px;top:560.80px;font-size:9.6px;line-height:9.6px;color:#5e5e5e;z-index:11;transform:scaleX(0.9281);'>winserver/sites/webparts/_layouts/15/user.aspx</div>

</body></html>
